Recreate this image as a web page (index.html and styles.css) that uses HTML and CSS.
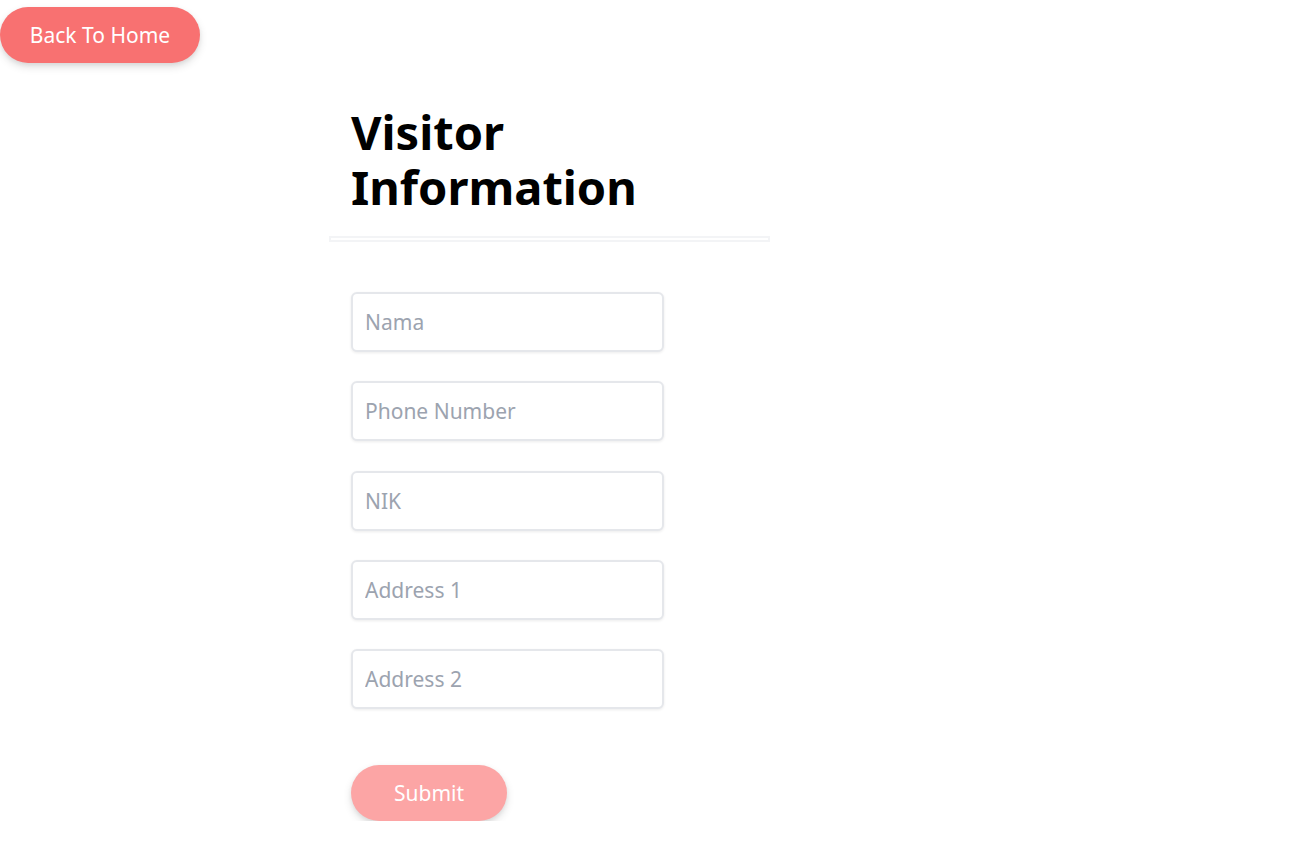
FILE: index.html
```html
<!DOCTYPE html>
<html>
<head>
<meta charset="utf-8">
<link rel="stylesheet" href="styles.css">
</head>
<body>
<div class="top">
  <button class="btn btn-back">Back To Home</button>
</div>
<main class="panel">
  <h1 class="title">Visitor Information</h1>
  <hr class="divider">
  <form class="form">
    <input class="field" type="text" placeholder="Nama">
    <input class="field" type="text" placeholder="Phone Number">
    <input class="field" type="text" placeholder="NIK">
    <input class="field" type="text" placeholder="Address 1">
    <input class="field" type="text" placeholder="Address 2">
    <div class="actions">
      <button class="btn btn-submit" type="button">Submit</button>
    </div>
  </form>
</main>
</body>
</html>
```

FILE: styles.css
```css
* { box-sizing: border-box; }
html, body { margin: 0; padding: 0; background: #fff; }
body {
  font-family: "Noto Sans", "Open Sans", sans-serif;
  color: #000;
}
.top { padding-top: 7px; }
.btn {
  border: none;
  border-radius: 9999px;
  color: #fff;
  font-family: inherit;
  font-size: 21px;
  height: 56px;
  box-shadow: 0 4px 8px rgba(0,0,0,0.12), 0 2px 4px rgba(0,0,0,0.06);
  cursor: pointer;
}
.btn-back {
  width: 200px;
  background: #f87171;
  display: block;
}
.panel {
  width: 441px;
  margin-left: 329px;
  padding-top: 42px;
}
.title {
  margin: 0;
  padding-left: 22px;
  font-size: 47px;
  line-height: 55px;
  font-weight: 700;
  width: 330px;
}
.divider {
  margin: 21px 0 0;
  height: 6px;
  border: 2px solid #f3f4f6;
}
.form {
  padding-left: 22px;
  padding-top: 50px;
  display: flex;
  flex-direction: column;
  gap: 29.25px;
}
.field {
  width: 313px;
  height: 60px;
  border: 2px solid #e5e7eb;
  border-radius: 6px;
  padding: 0 12px;
  font-family: inherit;
  font-size: 21px;
  color: #374151;
  box-shadow: 0 1px 3px rgba(0,0,0,0.08);
  outline: none;
}
.field::placeholder { color: #9ca3af; }
.actions { padding-top: 27px; }
.btn-submit {
  width: 156px;
  background: #fca5a5;
}
```
